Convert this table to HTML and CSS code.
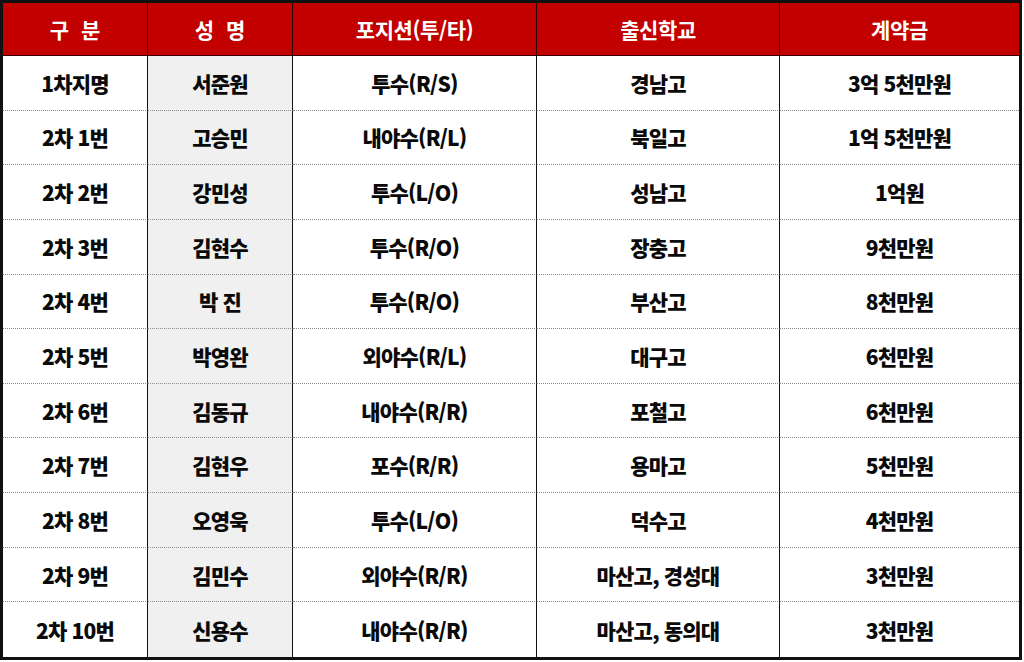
FILE: index.html
```html
<!DOCTYPE html>
<html lang="ko">
<head>
<meta charset="utf-8">
<title>드래프트 계약 현황</title>
<link rel="stylesheet" href="styles.css">
</head>
<body>
<div class="sheet">
  <div class="grid">
    <div class="cell head spaced">구 분</div>
    <div class="cell head spaced">성 명</div>
    <div class="cell head">포지션(투/타)</div>
    <div class="cell head">출신학교</div>
    <div class="cell head last">계약금</div>

    <div class="cell">1차지명</div><div class="cell name">서준원</div><div class="cell">투수(R/S)</div><div class="cell">경남고</div><div class="cell last">3억 5천만원</div>
    <div class="cell">2차 1번</div><div class="cell name">고승민</div><div class="cell">내야수(R/L)</div><div class="cell">북일고</div><div class="cell last">1억 5천만원</div>
    <div class="cell">2차 2번</div><div class="cell name">강민성</div><div class="cell">투수(L/O)</div><div class="cell">성남고</div><div class="cell last">1억원</div>
    <div class="cell">2차 3번</div><div class="cell name">김현수</div><div class="cell">투수(R/O)</div><div class="cell">장충고</div><div class="cell last">9천만원</div>
    <div class="cell">2차 4번</div><div class="cell name">박 진</div><div class="cell">투수(R/O)</div><div class="cell">부산고</div><div class="cell last">8천만원</div>
    <div class="cell">2차 5번</div><div class="cell name">박영완</div><div class="cell">외야수(R/L)</div><div class="cell">대구고</div><div class="cell last">6천만원</div>
    <div class="cell">2차 6번</div><div class="cell name">김동규</div><div class="cell">내야수(R/R)</div><div class="cell">포철고</div><div class="cell last">6천만원</div>
    <div class="cell">2차 7번</div><div class="cell name">김현우</div><div class="cell">포수(R/R)</div><div class="cell">용마고</div><div class="cell last">5천만원</div>
    <div class="cell">2차 8번</div><div class="cell name">오영욱</div><div class="cell">투수(L/O)</div><div class="cell">덕수고</div><div class="cell last">4천만원</div>
    <div class="cell">2차 9번</div><div class="cell name">김민수</div><div class="cell">외야수(R/R)</div><div class="cell">마산고, 경성대</div><div class="cell last">3천만원</div>
    <div class="cell bottom">2차 10번</div><div class="cell name bottom">신용수</div><div class="cell bottom">내야수(R/R)</div><div class="cell bottom">마산고, 동의대</div><div class="cell last bottom">3천만원</div>
  </div>
</div>
</body>
</html>
```
FILE: styles.css
```css
html, body {
  margin: 0;
  padding: 0;
  background: #ffffff;
}
.sheet {
  box-sizing: border-box;
  width: 1022px;
  height: 660px;
  border: 3px solid #111111;
  background: #ffffff;
}
.grid {
  display: grid;
  height: 100%;
  grid-template-columns: 145px 145px 244px 243px 1fr;
  grid-template-rows: 53px repeat(11, 1fr);
  font-family: "Noto Sans CJK KR", "Noto Sans", sans-serif;
  font-weight: 900;
  font-size: 21px;
  color: #0a0a0a;
}
.cell {
  box-sizing: border-box;
  display: flex;
  align-items: center;
  justify-content: center;
  border-right: 1px solid #111111;
  border-bottom: 1px dotted #8a8a8a;
  letter-spacing: -0.8px;
  white-space: pre;
}
.cell.last {
  border-right: none;
}
.cell.bottom {
  border-bottom: none;
}
.cell.head {
  background: #c20000;
  color: #ffffff;
  font-weight: 700;
  letter-spacing: -0.4px;
  border-bottom: 1px solid #3a0000;
  border-right-color: #2a0000;
}
.cell.head.spaced {
  letter-spacing: 3px;
  padding-left: 3px;
}
.cell.head.last {
  border-right: none;
}
.cell.name {
  background: #f0f0f0;
}
```
